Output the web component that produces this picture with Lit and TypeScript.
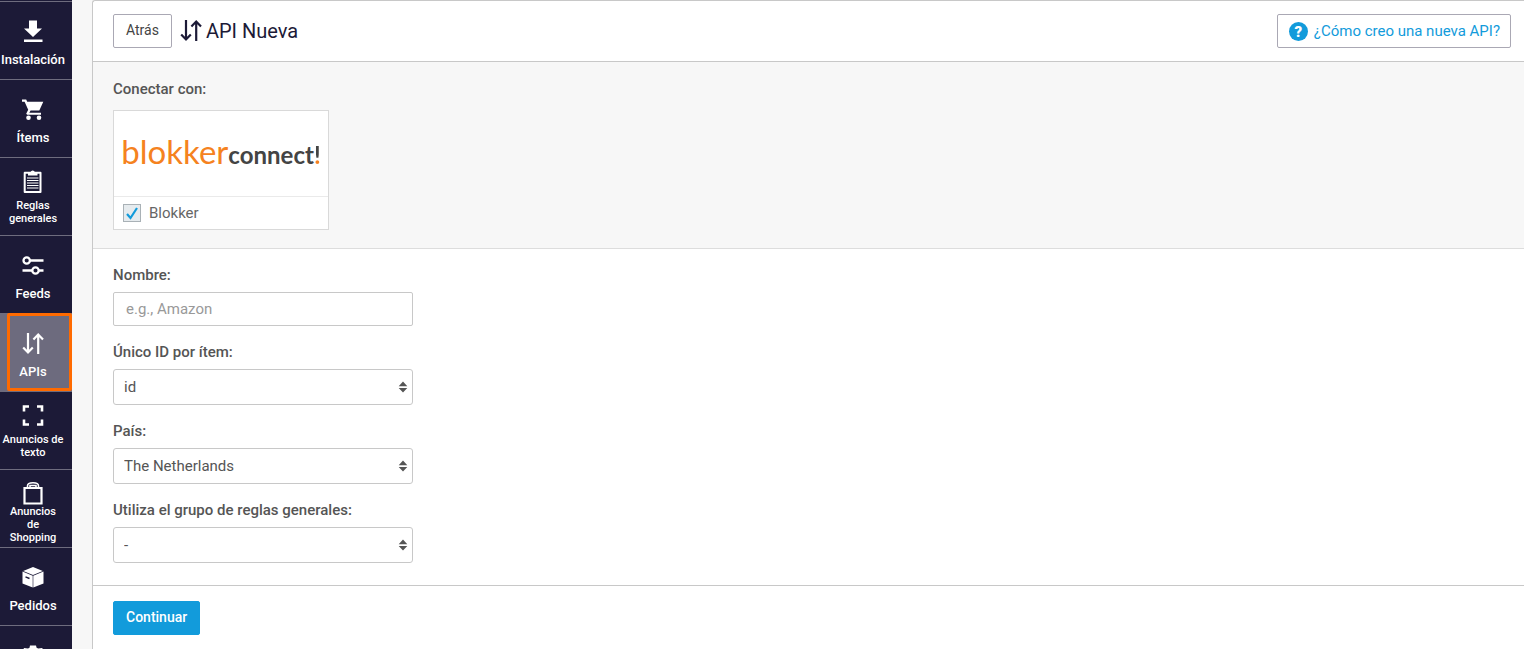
import { LitElement, html, svg, css } from "lit";
import { customElement, state } from "lit/decorators.js";
import { classMap } from "lit/directives/class-map.js";

const arrows = svg`<path d="M6 1v19M1.200 15.500L6 20.500l4.800-5M16.200 22V3M11.400 7.500l4.800-5 4.800 5" fill="none" stroke="currentColor" stroke-width="2.200"/>`;

const icons: Record<string, unknown> = {
  download: svg`<path fill="currentColor" d="M7 .5h8v8h5l-9 8.500-9-8.500h5zM2 19.500h18.500V22H2z"/>`,
  cart: svg`<g fill="currentColor"><path d="M0 1.500h4.200l1 2.200H21.300L17.300 12.500H8.600l-1.300 2.200H19v2H5.200l-1-1 2-3.900L2.600 3.700H0z"/><circle cx="6.500" cy="19.800" r="2.300"/><circle cx="17" cy="19.800" r="2.300"/></g>`,
  clipboard: svg`<path d="M2.700 3.700h15.800v19.300H2.700z" fill="none" stroke="currentColor" stroke-width="2" stroke-linejoin="round"/><path fill="currentColor" d="M6 6.500V3h2.600a2.200 2.200 0 0 1 4.200 0h2.700v3.500z"/><path stroke="currentColor" stroke-width="1.200" d="M5 9h11.500M5 11.500h11.500M5 14h11.500M5 16.500h11.500M5 19h11.500"/>`,
  sliders: svg`<g fill="none" stroke="currentColor" stroke-width="2.300"><circle cx="4.700" cy="6.500" r="3.200"/><path d="M8 6.500h13.500M0.500 16.500h9.500M17 16.500h4.500"/><circle cx="13.500" cy="16.500" r="3.200"/></g>`,
  arrows,
  frame: svg`<path d="M2 8.500V3.500h5M15 3.500h5v5M20 16.500v5h-5M7 21.500H2v-5" fill="none" stroke="currentColor" stroke-width="2.600"/>`,
  bag: svg`<g fill="none" stroke="currentColor"><path d="M2.500 7h17v15.500h-17z" stroke-width="2.200"/><path d="M5.500 7V5q0-3.200 5.500-3.200T16.500 5v2M8 6V4.500h6V6" stroke-width="1.600"/></g>`,
  box: svg`<path fill="currentColor" d="M11 1l9.800 3.900L11 9 1.200 4.900zM.5 5.500l10.200 4.300v11.700L.5 17.500zM21.500 5.500l-10.200 4.300v11.700l10.200-4z"/><path d="M3.500 10.800l4 1.700" stroke="#1c1a37" stroke-width="1.400"/>`,
  gear: svg`<path fill="currentColor" d="M8 1.500h6l.6 2.200 1.600.9 4-.6 2 4.200-2.200 2.200v3l2.200 2.200-2.200 3.700-3-.8-2.200 1.200-.8 3H8.800l-.8-3-2.200-1.300-3 .8L.6 15.500l2.200-2.200v-2.500L.1 8.200 2 4l4 .6 1.500-.9z"/>`,
};

interface NavItem {
  icon: string;
  label: string;
  small?: boolean;
  active?: boolean;
}

const nav: NavItem[] = [
  { icon: "download", label: "Instalación" },
  { icon: "cart", label: "Ítems" },
  { icon: "clipboard", label: "Reglas generales", small: true },
  { icon: "sliders", label: "Feeds" },
  { icon: "arrows", label: "APIs", active: true },
  { icon: "frame", label: "Anuncios de texto", small: true },
  { icon: "bag", label: "Anuncios de Shopping", small: true },
  { icon: "box", label: "Pedidos" },
  { icon: "gear", label: "" },
];

@customElement("side-nav")
export class SideNav extends LitElement {
  static styles = css`
    :host {
      display: block;
      background: #1c1a37;
      padding-top: 1px;
      box-sizing: border-box;
      overflow: hidden;
    }
    .item {
      position: relative;
      display: flex;
      flex-direction: column;
      align-items: center;
      justify-content: center;
      gap: 7px;
      height: 78px;
      box-sizing: border-box;
      padding: 7px 6px 0 0;
      border-top: 1px solid #6e6c7e;
      color: #fff;
      text-decoration: none;
      text-align: center;
      font-size: 13px;
      line-height: 18px;
      font-weight: 500;
    }
    .label {
      min-height: 18px;
    }
    .small {
      gap: 6px;
      padding: 0 6px 0 0;
      font-size: 11px;
      line-height: 13px;
    }
    .small .label {
      padding: 0 1px;
    }
    .icon {
      width: 22px;
      height: 24px;
      flex: none;
    }
    .bag {
      gap: 0;
      padding-top: 8px;
    }
    .bag .label {
      padding: 0 8px;
    }
    .active {
      background: #6d6b7e;
    }
    .active::after {
      content: "";
      position: absolute;
      inset: -1px 0 0 7px;
      border: 3px solid #ff6a00;
      border-radius: 2px;
    }
  `;

  render() {
    return html`<nav>
      ${nav.map(
        (n) => html`<a
          href="#"
          class=${classMap({ item: true, small: !!n.small, active: !!n.active, bag: n.icon === "bag" })}
        >
          <svg class="icon" viewBox="0 0 22 24" aria-hidden="true">${icons[n.icon]}</svg>
          <span class="label">${n.label}</span>
        </a>`
      )}
    </nav>`;
  }
}

@customElement("app-root")
export class AppRoot extends LitElement {
  @state() private connected = true;

  static styles = css`
    :host {
      display: grid;
      grid-template-columns: 72px minmax(0, 1fr);
      gap: 20px;
      height: 100vh;
      overflow: hidden;
      background: #f7f7f7;
      color: #555;
      font-family: Roboto, sans-serif;
      font-size: 15px;
      line-height: 20px;
    }
    .panel {
      background: #fff;
      border: 1px solid #c8c8c8;
      border-width: 1px 0 0 1px;
      border-radius: 3px 0 0 0;
      overflow: hidden;
    }
    .header {
      display: flex;
      align-items: center;
      gap: 8px;
      padding: 13px 13px 13px 20px;
      border-bottom: 1px solid #c8c8c8;
    }
    .btn {
      box-sizing: border-box;
      height: 34px;
      padding: 0 12px 2px;
      border: 1px solid #aaa8b4;
      border-radius: 2px;
      background: #fff;
      color: #444;
      font: inherit;
      font-size: 14px;
      cursor: pointer;
    }
    .title {
      display: flex;
      align-items: center;
      gap: 4px;
      margin: 0;
      color: #1c1a37;
      font-size: 20px;
      line-height: 24px;
      font-weight: 400;
    }
    .title-icon {
      width: 22px;
      height: 24px;
    }
    .help {
      display: flex;
      align-items: center;
      gap: 6px;
      box-sizing: border-box;
      height: 34px;
      margin-left: auto;
      padding: 0 10px 0 11px;
      border: 1px solid #aaa8b4;
      border-radius: 2px;
      color: #129bdb;
      text-decoration: none;
    }
    .help-mark {
      display: grid;
      place-items: center;
      width: 19px;
      height: 19px;
      border-radius: 50%;
      background: #129bdb;
      color: #fff;
      font-size: 15px;
      font-weight: 900;
    }
    .connect {
      padding: 17px 20px 18px;
      background: #f7f7f7;
      border-bottom: 1px solid #ddd;
    }
    .heading,
    .field label {
      display: block;
      margin: 0;
      font-size: 15px;
      line-height: 20px;
      font-weight: 500;
    }
    .card {
      box-sizing: border-box;
      width: 216px;
      margin-top: 11px;
      border: 1px solid #d9d9d9;
      background: #fff;
    }
    .logo {
      display: flex;
      align-items: baseline;
      justify-content: center;
      height: 85px;
      line-height: 80px;
      font-family: Lato, sans-serif;
      color: #444;
    }
    .logo-main {
      color: #f58220;
      font-size: 33px;
    }
    .logo-sub {
      font-size: 24px;
      font-weight: 700;
    }
    .logo-mark {
      background: linear-gradient(#444 68%, #f58220 68%);
      background-clip: text;
      -webkit-background-clip: text;
      color: transparent;
    }
    .choice {
      display: flex;
      align-items: center;
      gap: 8px;
      height: 32px;
      padding: 0 9px;
      border-top: 1px solid #eaeaea;
      color: #666;
    }
    .tick {
      display: grid;
      width: 18px;
      height: 18px;
    }
    .tick > * {
      grid-area: 1 / 1;
    }
    .tick input {
      appearance: none;
      width: 18px;
      height: 18px;
      margin: 0;
      box-sizing: border-box;
      border: 1px solid #a9b1b6;
      background: #e6ebee;
    }
    .tick svg {
      pointer-events: none;
    }
    .form {
      display: grid;
      gap: 16px;
      padding: 16px 20px 22px;
      border-bottom: 1px solid #c8c8c8;
    }
    .field {
      display: grid;
      gap: 7px;
      width: 300px;
    }
    .control {
      box-sizing: border-box;
      width: 100%;
      height: 36px;
      padding: 0 10px;
      border: 1px solid #c8c8c8;
      border-radius: 3px;
      background: #fff;
      color: #555;
      font: inherit;
      appearance: none;
    }
    .text {
      height: 34px;
      padding: 0 12px;
      border-radius: 2px;
    }
    .text::placeholder {
      color: #999;
    }
    .picker {
      display: grid;
      align-items: center;
    }
    .picker > * {
      grid-area: 1 / 1;
    }
    .caret {
      justify-self: end;
      width: 8px;
      height: 12px;
      margin-right: 6px;
      pointer-events: none;
      overflow: visible;
    }
    .footer {
      padding: 15px 20px;
    }
    .primary {
      border-color: #129bdb;
      background: #129bdb;
      color: #fff;
      font-weight: 500;
    }
  `;

  private picker(id: string, label: string, value: string) {
    return html`<div class="field">
      <label for=${id}>${label}</label>
      <div class="picker">
        <select class="control" id=${id}>
          <option>${value}</option>
        </select>
        <svg class="caret" viewBox="0 0 8 12" aria-hidden="true">
          <path fill="#555" d="M-.3 5.200L4 .5l4.300 4.700zM-.3 7h8.600L4 11.500z" />
        </svg>
      </div>
    </div>`;
  }

  render() {
    return html`
      <side-nav></side-nav>
      <main class="panel">
        <header class="header">
          <button class="btn" type="button">Atrás</button>
          <h1 class="title">
            <svg class="title-icon" viewBox="0 0 22 24" aria-hidden="true">${arrows}</svg>
            API Nueva
          </h1>
          <a class="help" href="#"><span class="help-mark">?</span>¿Cómo creo una nueva API?</a>
        </header>
        <section class="connect">
          <h2 class="heading">Conectar con:</h2>
          <div class="card">
            <div class="logo">
              <span class="logo-main">blokker</span
              ><span class="logo-sub">connect<span class="logo-mark">!</span></span>
            </div>
            <label class="choice">
              <span class="tick">
                <input
                  type="checkbox"
                  .checked=${this.connected}
                  @change=${(e: Event) => (this.connected = (e.target as HTMLInputElement).checked)}
                />
                ${this.connected
                  ? html`<svg viewBox="0 0 18 18" aria-hidden="true">
                      <path d="M4 10l3.500 4L14 4" fill="none" stroke="#129bdb" stroke-width="2.200" />
                    </svg>`
                  : null}
              </span>
              Blokker
            </label>
          </div>
        </section>
        <form class="form">
          <div class="field">
            <label for="name">Nombre:</label>
            <input class="control text" id="name" type="text" placeholder="e.g., Amazon" />
          </div>
          ${this.picker("uid", "Único ID por ítem:", "id")}
          ${this.picker("country", "País:", "The Netherlands")}
          ${this.picker("rules", "Utiliza el grupo de reglas generales:", "-")}
        </form>
        <footer class="footer">
          <button class="btn primary" type="button">Continuar</button>
        </footer>
      </main>
    `;
  }
}
